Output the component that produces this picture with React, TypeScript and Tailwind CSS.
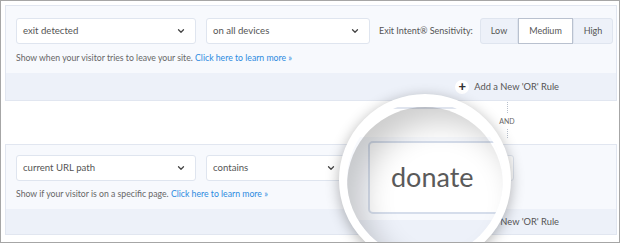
import { ChevronDown } from "lucide-react";

const font = { fontFamily: "Lato, 'Open Sans', sans-serif" };

function Select({ label, width }: { label: string; width: string }) {
  return (
    <div
      className={`flex h-[26px] ${width} shrink-0 items-center justify-between rounded-[3px] border border-[#dfe5ef] bg-white pl-[6px] pr-[9px] text-[9.6px] text-[#555]`}
    >
      <span>{label}</span>
      <ChevronDown size={10} strokeWidth={3} className="text-[#444]" />
    </div>
  );
}

function OrRule({ h }: { h: string }) {
  return (
    <div className={`flex ${h} items-center justify-end bg-[#edf1f9] pr-[57px] text-[9.3px] text-[#555]`}>
      <span className="mr-[5px] flex h-[14px] w-[14px] items-center justify-center rounded-full bg-white text-[13px] font-black leading-none text-[#333]">
        +
      </span>
      Add a New &#39;OR&#39; Rule
    </div>
  );
}

export default function App() {
  return (
    <div
      className="relative h-[243px] w-[620px] overflow-hidden border border-[#a6a6a6] bg-white pl-[4px] pr-[2px] pt-[4px]"
      style={font}
    >
      {/* first rule */}
      <div className="border border-[#e1e6f0] bg-[#f7f9fd]">
        <div className="pl-[10px] pr-[2px] pt-[12px] pb-[9px]">
          <div className="flex items-center">
            <Select label="exit detected" width="w-[180px]" />
            <div className="w-[10px] shrink-0" />
            <Select label="on all devices" width="w-[164px]" />
            <span className="ml-[9px] w-[92px] shrink-0 whitespace-nowrap text-[9px] text-[#555]">
              Exit Intent® Sensitivity:
            </span>
            <div className="ml-[9px] flex h-[26px] shrink-0 text-[9px] text-[#555]">
              <div className="flex w-[38px] items-center justify-center rounded-l-[3px] border border-[#dfe5ef] bg-[#edf1f9]">
                Low
              </div>
              <div className="flex w-[55px] items-center justify-center border border-[#b9c1cf] bg-white">
                Medium
              </div>
              <div className="flex w-[40px] items-center justify-center rounded-r-[3px] border border-[#dfe5ef] bg-[#edf1f9]">
                High
              </div>
            </div>
          </div>
          <p className="mt-[8px] text-[8.7px] leading-[12px] text-[#666]">
            Show when your visitor tries to leave your site.{" "}
            <span className="text-[#2d8be0]">Click here to learn more »</span>
          </p>
        </div>
        <OrRule h="h-[27px]" />
      </div>

      {/* AND connector */}
      <div className="flex h-[43px] w-[510px] flex-col items-end">
        <div className="flex w-[16px] flex-col items-center">
          <div className="mt-[1px] h-[11px] border-l border-dotted border-[#b8c0cc]" />
          <span className="mt-[4px] text-[7px] leading-[8px] text-[#666]">AND</span>
          <div className="mt-[4px] h-[9px] border-l border-dotted border-[#b8c0cc]" />
        </div>
      </div>

      {/* second rule */}
      <div className="border border-[#e1e6f0] bg-[#f7f9fd]">
        <div className="pl-[10px] pr-[2px] pt-[10px] pb-[9px]">
          <div className="flex items-center gap-[10px]">
            <Select label="current URL path" width="w-[180px]" />
            <Select label="contains" width="w-[140px]" />
            <div className="h-[26px] w-[158px] rounded-[3px] border border-[#dfe5ef] bg-white" />
          </div>
          <p className="mt-[7px] text-[8.7px] leading-[12px] text-[#666]">
            Show if your visitor is on a specific page.{" "}
            <span className="text-[#2d8be0]">Click here to learn more »</span>
          </p>
        </div>
        <OrRule h="h-[25px]" />
      </div>

      {/* magnifier lens */}
      <div className="absolute left-[338px] top-[93px] h-[172px] w-[172px] overflow-hidden rounded-full border-[8px] border-white bg-white shadow-[0_3px_14px_rgba(0,0,0,0.3)]">
        <div className="relative h-full w-full">
          <div className="mt-[5px] h-[2px] bg-[#dfe4ee]" />
          <div className="h-[28px] bg-white" />
          <div className="bg-[#f7f9fd] pt-[4px] pl-[21px]">
            <div className="flex h-[73px] w-[200px] items-center rounded-[5px] border-[2px] border-[#d5ddeb] bg-white pl-[21px] text-[27px] text-[#5a5a5a]">
              donate
            </div>
            <div className="h-[6px]" />
          </div>
          <div className="h-[60px] bg-[#edf1f9]" />
          <div className="pointer-events-none absolute inset-0 rounded-full shadow-[inset_16px_14px_30px_rgba(0,0,0,0.2)]" />
        </div>
      </div>
    </div>
  );
}
